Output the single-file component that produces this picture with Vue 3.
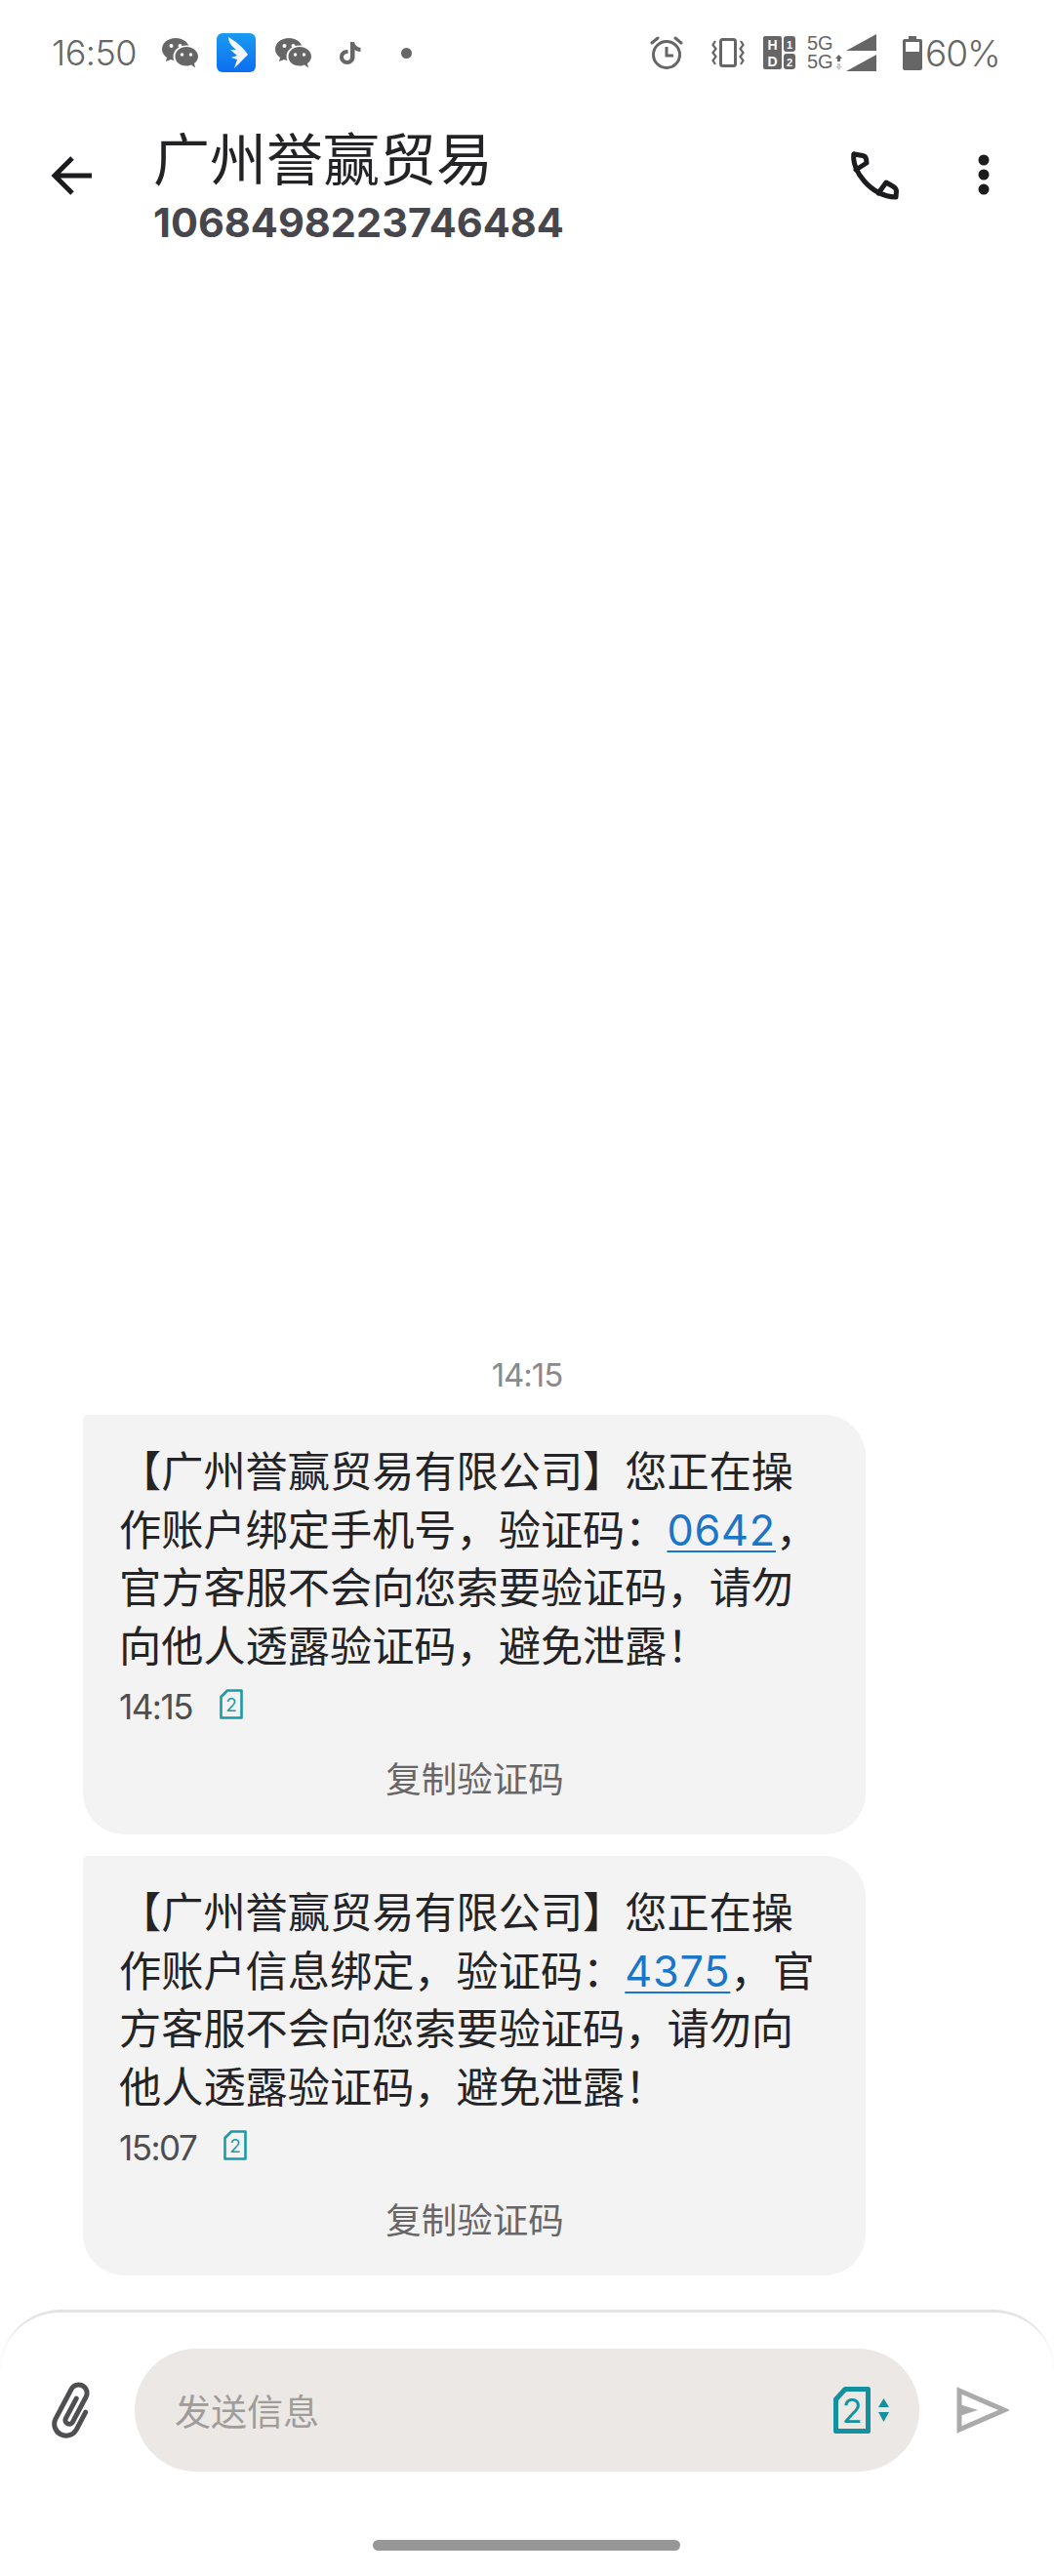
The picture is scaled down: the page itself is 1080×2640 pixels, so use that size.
<script setup>
const messages = [
  { before: '【广州誉赢贸易有限公司】您正在操作账户绑定手机号，验证码：', code: '0642', after: '，官方客服不会向您索要验证码，请勿向他人透露验证码，避免泄露！', time: '14:15' },
  { before: '【广州誉赢贸易有限公司】您正在操作账户信息绑定，验证码：', code: '4375', after: '，官方客服不会向您索要验证码，请勿向他人透露验证码，避免泄露！', time: '15:07' }
]
</script>

<template>
  <div class="screen">
    <div class="status">
      <span class="clock">16:50</span>
      <svg class="s-wechat1" width="37" height="31" viewBox="0 0 37 31">
        <path d="M14 0C6 0 0 5 0 11.500C0 15 2 18 5 20L4 24L9 22C11 23 13 23 15 23C22 23 28 18 28 11.500C28 5 22 0 14 0Z" fill="#666"/>
        <ellipse cx="25" cy="19" rx="13.500" ry="11.500" fill="#fff"/>
        <path d="M25 9C18.500 9 13.500 13.500 13.500 19C13.500 24.500 18.500 28.500 25 28.500C27 28.500 28.500 28 30 27.500L34 30.500L33 26C35.500 24 37 21.500 37 19C37 13.500 31.500 9 25 9Z" fill="#666"/>
        <circle cx="9.500" cy="8" r="2" fill="#fff"/><circle cx="18.500" cy="8" r="2" fill="#fff"/>
        <circle cx="20.500" cy="17" r="1.800" fill="#fff"/><circle cx="29.500" cy="17" r="1.800" fill="#fff"/>
      </svg>
      <svg class="s-app" width="40" height="40" viewBox="0 0 40 40">
        <defs><linearGradient id="appBlue" x1="0" y1="0" x2="0" y2="1"><stop offset="0" stop-color="#1a9bf0"/><stop offset="1" stop-color="#0d6ef2"/></linearGradient></defs>
        <rect width="40" height="40" rx="6" fill="url(#appBlue)"/>
        <path d="M12 4C19 8 28 15 32 22L18 36L21 27L15 25L21 23L14 17L20 17C15 13 12 9 12 4Z" fill="#f2f7fd"/>
      </svg>
      <svg class="s-wechat2" width="37" height="31" viewBox="0 0 37 31">
        <path d="M14 0C6 0 0 5 0 11.500C0 15 2 18 5 20L4 24L9 22C11 23 13 23 15 23C22 23 28 18 28 11.500C28 5 22 0 14 0Z" fill="#666"/>
        <ellipse cx="25" cy="19" rx="13.500" ry="11.500" fill="#fff"/>
        <path d="M25 9C18.500 9 13.500 13.500 13.500 19C13.500 24.500 18.500 28.500 25 28.500C27 28.500 28.500 28 30 27.500L34 30.500L33 26C35.500 24 37 21.500 37 19C37 13.500 31.500 9 25 9Z" fill="#666"/>
        <circle cx="9.500" cy="8" r="2" fill="#fff"/><circle cx="18.500" cy="8" r="2" fill="#fff"/>
        <circle cx="20.500" cy="17" r="1.800" fill="#fff"/><circle cx="29.500" cy="17" r="1.800" fill="#fff"/>
      </svg>
      <svg class="s-tiktok" width="22" height="23" viewBox="0 0 22 23">
        <path d="M11 0H15C15.500 3 18 5.500 21.500 6V10C19 10 17 9.200 15.500 8V15.500C15.500 19.800 12 23 8 23C3.500 23 0 19.800 0 15.500C0 11 4 7.500 8.500 8.200V12.200C6.200 11.600 4 13.200 4 15.500C4 17.500 5.700 19 7.700 19C9.700 19 11 17.500 11 15.500Z" fill="#666"/>
      </svg>
      <svg class="s-dot" width="11" height="11" viewBox="0 0 11 11"><circle cx="5.500" cy="5.500" r="5.500" fill="#666"/></svg>

      <svg class="s-alarm" width="34" height="34" viewBox="0 0 34 34" fill="none" stroke="#666" stroke-width="3">
        <circle cx="17" cy="19" r="13.500"/>
        <path d="M17 11V20H24"/>
        <path d="M2 7L8 2M32 7L26 2" stroke-linecap="round"/>
      </svg>
      <svg class="s-vib" width="34" height="30" viewBox="0 0 34 30" fill="none" stroke="#666">
        <rect x="9.500" y="1.500" width="15" height="27" rx="2" stroke-width="3"/>
        <path d="M4 3L1.500 7L4.500 11L1.500 15L4.500 19L1.500 23L4 27M30 3L32.500 7L29.500 11L32.500 15L29.500 19L32.500 23L30 27" stroke-width="2.200"/>
      </svg>
      <svg class="s-hd" width="33" height="34" viewBox="0 0 33 34">
        <rect width="19" height="34" rx="2" fill="#666"/>
        <rect x="21" y="0" width="12" height="16" rx="3" fill="#666"/>
        <rect x="21" y="18" width="12" height="16" rx="3" fill="#666"/>
        <text x="9.500" y="14" class="hd-t">H</text>
        <text x="9.500" y="31" class="hd-t">D</text>
        <text x="27" y="13" class="hd-n">1</text>
        <text x="27" y="31" class="hd-n">2</text>
      </svg>
      <div class="s-5g">
        <span>5G</span>
        <span>5G</span>
        <svg class="s-arrow" width="7" height="16" viewBox="0 0 7 16">
          <path d="M3.500 0L7 4H5V7H2V4H0Z" fill="#666"/>
          <path d="M3.500 16L7 12H5V9H2V12H0Z" fill="#ccc"/>
        </svg>
      </div>
      <svg class="s-signal" width="31" height="38" viewBox="0 0 31 38">
        <path d="M0 17L31 0V17Z" fill="#666"/>
        <path d="M0 38L31 21V38Z" fill="#666"/>
      </svg>
      <svg class="s-batt" width="20" height="35" viewBox="0 0 20 35">
        <rect x="6" y="0" width="8" height="4" fill="#666"/>
        <rect x="0" y="3" width="20" height="32" rx="2" fill="#666"/>
        <rect x="3" y="6" width="14" height="10" fill="#fff"/>
      </svg>
      <span class="pct">60%</span>
    </div>

    <header class="head">
      <svg class="h-back" width="42" height="40" viewBox="0 0 42 40" fill="none" stroke="#1c1c1e" stroke-width="5">
        <path d="M42 20H4M22 2L4 20L22 38"/>
      </svg>
      <div class="h-text">
        <div class="h-title">广州誉赢贸易</div>
        <div class="h-number">1068498223746484</div>
      </div>
      <svg class="h-phone" width="52" height="50" viewBox="0 0 52 50" fill="none" stroke="#1c1c1e" stroke-width="5" stroke-linejoin="round" stroke-linecap="round">
        <path d="M4 3L13 4.500Q16 5 16.500 8L17 12L6 19"/>
        <path d="M4 3C1 18 20 46 47 47L47.500 41Q47.500 38 44 36L37 32L29 43"/>
      </svg>
      <svg class="h-more" width="20" height="42" viewBox="0 0 20 42">
        <circle cx="10" cy="6" r="5.500" fill="#1c1c1e"/>
        <circle cx="10" cy="21" r="5.500" fill="#1c1c1e"/>
        <circle cx="10" cy="36" r="5.500" fill="#1c1c1e"/>
      </svg>
    </header>

    <main class="thread">
      <div class="stamp">14:15</div>
      <article v-for="m in messages" :key="m.code" class="bubble">
        <p class="msg">{{ m.before }}<span class="code">{{ m.code }}</span>{{ m.after }}</p>
        <div class="meta">
          <span class="meta-time">{{ m.time }}</span>
          <svg class="meta-sim" width="24" height="31" viewBox="0 0 24 31">
            <path d="M8 1.500H22.500V29.500H1.500V8Z" fill="none" stroke="#1a9ba8" stroke-width="2.600" stroke-linejoin="round"/>
            <text x="12" y="23" class="meta-two">2</text>
          </svg>
        </div>
        <div class="copy">复制验证码</div>
      </article>
    </main>

    <footer class="composer">
      <div class="row">
        <svg class="attach" width="52" height="58" viewBox="0 0 52 58" fill="none" stroke="#4f4f52" stroke-width="5" stroke-linecap="round">
          <path transform="rotate(28 26 29)" d="M25 16V39A4 4 0 0 0 33 39V10A8.500 8.500 0 0 0 16 10V44A12 12 0 0 0 40 44V24"/>
        </svg>
        <div class="field">
          <span class="placeholder">发送信息</span>
          <svg class="field-sim" width="38" height="48" viewBox="0 0 38 48">
            <path d="M12 2.500H35.500V45.500H2.500V13Z" fill="none" stroke="#14919f" stroke-width="5" stroke-linejoin="round"/>
            <text x="19" y="37" class="field-two">2</text>
          </svg>
          <svg class="field-arrows" width="11" height="24" viewBox="0 0 11 24">
            <path d="M5.500 0L11 9H0Z" fill="#14919f"/>
            <path d="M5.500 24L11 14H0Z" fill="#14919f"/>
          </svg>
        </div>
        <svg class="send" width="54" height="48" viewBox="0 0 54 48">
          <path d="M3 4L49 24L3 44Z" fill="none" stroke="#aaa" stroke-width="5"/>
          <path d="M3 18L22 24L3 30Z" fill="#aaa"/>
        </svg>
      </div>
      <div class="pill"></div>
    </footer>
  </div>
</template>

<style scoped>
.screen {
  width: 1080px;
  height: 2640px;
  background: #fff;
  display: flex;
  flex-direction: column;
  overflow: hidden;
  font-family: "Noto Sans CJK SC", sans-serif;
  color: #242426;
}

.status {
  height: 108px;
  flex: none;
  display: flex;
  align-items: center;
  padding-left: 53px;
  color: #666;
}
.clock {
  width: 87px;
  font: 300 36px/1 Inter, sans-serif;
  letter-spacing: -0.500px;
  white-space: nowrap;
}
.s-wechat1 { margin-left: 26px; }
.s-app { margin-left: 19px; }
.s-wechat2 { margin-left: 20px; }
.s-tiktok { margin-left: 29px; }
.s-dot { margin-left: 41px; }
.s-alarm { margin-left: 244px; }
.s-vib { margin-left: 29px; }
.s-hd { margin-left: 19px; }
.hd-t { font: 700 14px "Liberation Sans", sans-serif; fill: #fff; text-anchor: middle; }
.hd-n { font: 700 11px "Liberation Sans", sans-serif; fill: #fff; text-anchor: middle; }
.s-5g {
  position: relative;
  margin-left: 12px;
  width: 36px;
  display: flex;
  flex-direction: column;
  font: 500 20px/19px "Liberation Sans", sans-serif;
}
.s-arrow { position: absolute; right: 0; bottom: 1px; }
.s-signal { margin-left: 4px; }
.s-batt { margin-left: 27px; }
.pct {
  margin-left: 3px;
  font: 300 37px/1 Inter, sans-serif;
  letter-spacing: -1px;
}

.head {
  flex: none;
  display: flex;
  align-items: flex-start;
  padding: 19px 0 0 52px;
}
.h-back { margin-top: 33px; }
.h-text { margin-left: 63px; width: 461px; }
.h-title {
  font-size: 58px;
  line-height: 66px;
  color: #232325;
}
.h-number {
  margin-top: 3px;
  font: 700 41.500px/64px Inter, sans-serif;
  color: #46464c;
}
.h-phone { margin: 28px 0 0 253px; }
.h-more { margin: 31px 0 0 75px; }

.thread {
  flex: 1;
  min-height: 0;
  display: flex;
  flex-direction: column;
  justify-content: flex-end;
  padding: 0 0 35px 85px;
}
.stamp {
  width: 910px;
  text-align: center;
  font: 400 33px/40px Inter, sans-serif;
  color: #8a8a8e;
  margin-bottom: 21px;
  letter-spacing: -1px;
}
.bubble {
  width: 802px;
  box-sizing: border-box;
  height: 430px;
  padding: 26px 44px 0 37px;
  background: #f4f3f3;
  border-radius: 5px 42px 42px 42px;
}
.bubble + .bubble { margin-top: 22px; }
.msg {
  margin: 0;
  font-size: 43.200px;
  line-height: 59.500px;
}
.code {
  font-family: Inter, sans-serif;
  line-height: 1;
  color: #1976c8;
  text-decoration: underline;
  text-decoration-thickness: 2px;
  text-underline-offset: 5px;
  letter-spacing: 0.800px;
}
.meta {
  height: 66px;
  margin-top: 2px;
  display: flex;
  align-items: center;
}
.meta-time {
  font: 400 35px/1 Inter, sans-serif;
  letter-spacing: -1.500px;
  color: #4e4e50;
  margin-right: 28px;
}
.meta-sim { margin-top: -6px; }
.meta-two { font: 400 19px Inter, sans-serif; fill: #1a9ba8; text-anchor: middle; }
.copy {
  margin: 15px 0 0 8px;
  text-align: center;
  font-size: 36.500px;
  line-height: 50px;
  color: #67676a;
}

.composer {
  flex: none;
  height: 273px;
  box-sizing: border-box;
  border-top: 3px solid #e4e4e4;
  border-radius: 62px 62px 0 0;
  padding-top: 37px;
  position: relative;
}
.row {
  display: flex;
  align-items: center;
  padding-left: 47px;
  height: 126px;
}
.attach { flex: none; }
.field {
  margin-left: 39px;
  width: 804px;
  height: 126px;
  border-radius: 63px;
  background: #ebe8e6;
  display: flex;
  align-items: center;
  padding: 0 31px 0 41px;
  box-sizing: border-box;
}
.placeholder {
  font-size: 37px;
  color: #a09c9a;
  flex: 1;
}
.field-sim { flex: none; }
.field-two { font: 400 34px Inter, sans-serif; fill: #14919f; text-anchor: middle; }
.field-arrows { margin-left: 8px; flex: none; }
.send { margin-left: 38px; flex: none; }
.pill {
  width: 315px;
  height: 11px;
  border-radius: 6px;
  background: #979797;
  margin: 70px auto 0 382px;
}
</style>
